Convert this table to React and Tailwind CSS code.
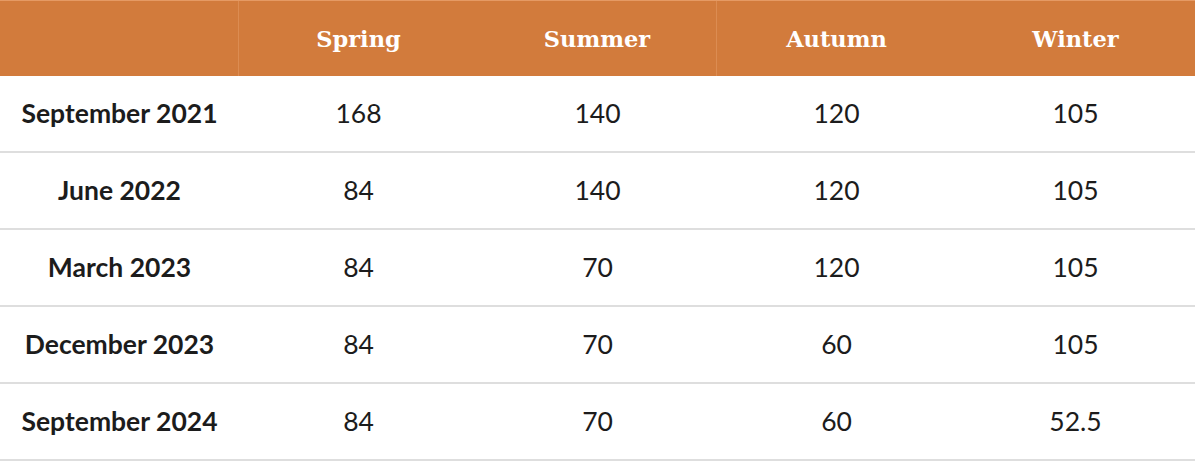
import React from 'react';

const seasons = ['Spring', 'Summer', 'Autumn', 'Winter'];

const rows = [
  { date: 'September 2021', values: ['168', '140', '120', '105'] },
  { date: 'June 2022', values: ['84', '140', '120', '105'] },
  { date: 'March 2023', values: ['84', '70', '120', '105'] },
  { date: 'December 2023', values: ['84', '70', '60', '105'] },
  { date: 'September 2024', values: ['84', '70', '60', '52.5'] },
];

const App = () => {
  return (
    <div className="min-h-screen bg-white" style={{ fontFamily: 'Lato, "Liberation Sans", sans-serif' }}>
      <div className="w-[1195px]">
        <div className="grid grid-cols-5 h-[76px] bg-[#d27b3c] border-t border-[#e59a64]">
          <div className="border-r border-[#dc8c52]" />
          {seasons.map((s, i) => (
            <div
              key={s}
              className={`flex items-center justify-center pt-[3px] text-white font-bold text-[22.5px] ${i === 1 ? 'border-r border-[#dc8c52]' : ''}`}
              style={{ fontFamily: '"DejaVu Serif", "Liberation Serif", serif' }}
            >
              {s}
            </div>
          ))}
        </div>
        {rows.map((row) => (
          <div key={row.date} className="grid grid-cols-5 h-[77px] border-b-2 border-[#dedede] text-[26.5px] text-[#1c1c1c]">
            <div className="flex items-center justify-center font-bold">{row.date}</div>
            {row.values.map((v, i) => (
              <div key={i} className="flex items-center justify-center">{v}</div>
            ))}
          </div>
        ))}
      </div>
    </div>
  );
};

export default App;
